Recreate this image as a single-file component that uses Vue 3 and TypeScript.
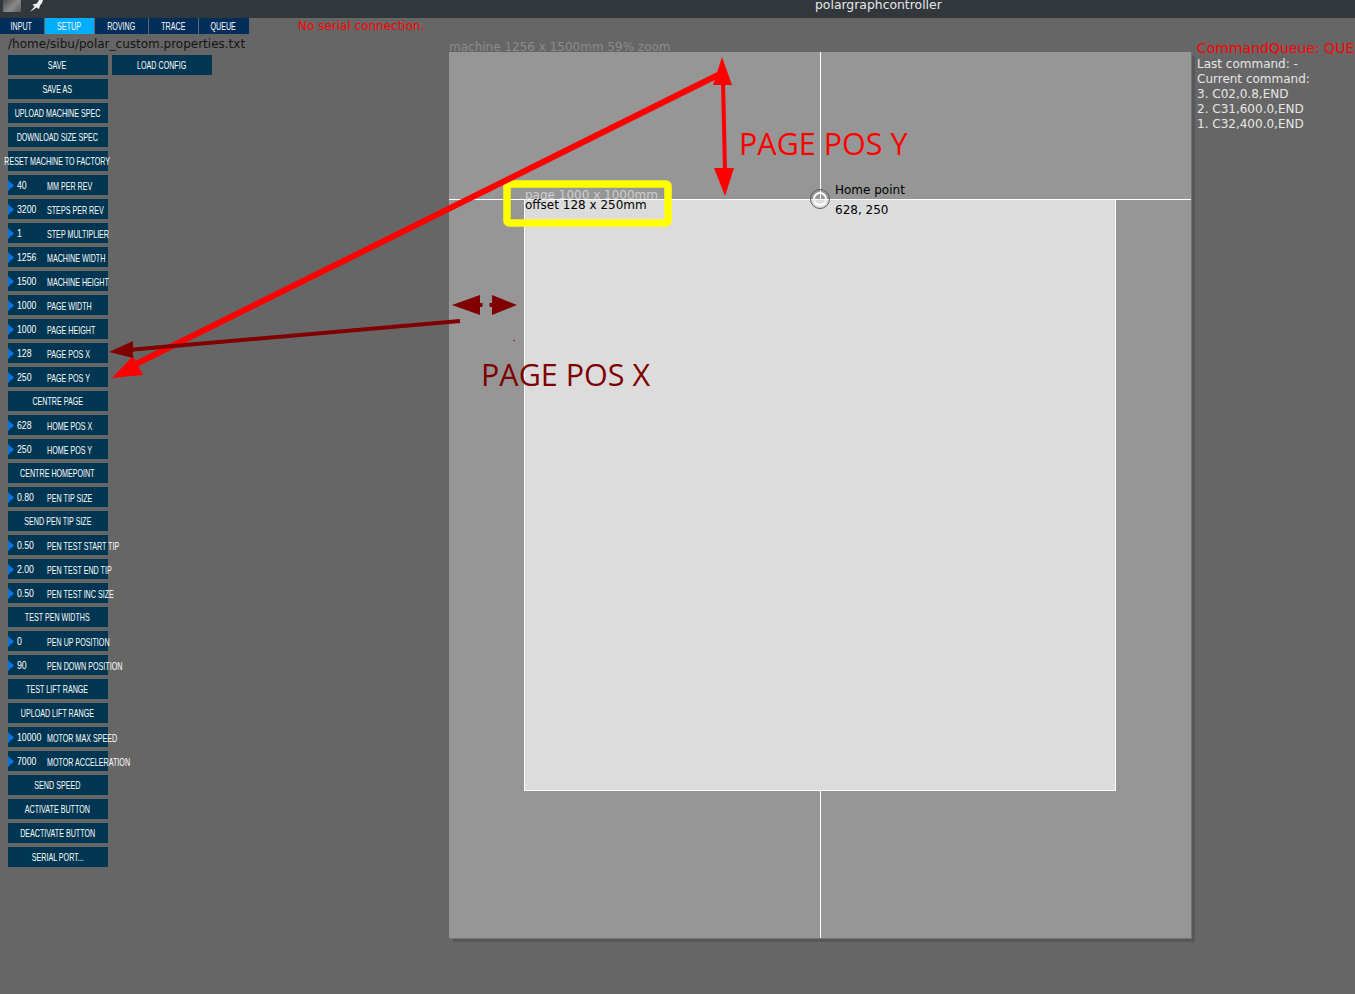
<template>
  <div class="screen">
    <!-- Window title bar -->
    <header class="titlebar">
      <div class="app-icon"></div>
      <svg class="pin" width="14" height="12" viewBox="0 0 14 12">
        <path d="M1 12 L5.5 6.5 L3.5 4.5 L8 3.5 L10 0 L14 0 L13 3 L11 5.5 L10 9 L7.5 7.5 Z" fill="#f0f0f0" />
      </svg>
      <span class="window-title">polargraphcontroller</span>
    </header>

    <!-- Tabs and serial status -->
    <nav class="tabs">
      <div
        v-for="tab in tabs"
        :key="tab.label"
        class="tab"
        :class="{ active: tab.label === 'SETUP' }"
        :style="{ width: tab.width + 'px' }"
      >
        <span class="squeeze">{{ tab.label }}</span>
      </div>
      <span class="serial">No serial connection.</span>
    </nav>

    <div class="workspace">
      <!-- Control panel -->
      <aside class="panel">
        <div class="config-path">/home/sibu/polar_custom.properties.txt</div>
        <div class="rows">
          <div class="row-pair">
            <div class="ctl button"><span class="squeeze">SAVE</span></div>
            <div class="ctl button"><span class="squeeze">LOAD CONFIG</span></div>
          </div>
          <template v-for="item in controls" :key="item.label">
            <div v-if="item.value" class="ctl number">
              <span class="value">{{ item.value }}</span>
              <span class="label">{{ item.label }}</span>
            </div>
            <div v-else class="ctl button"><span class="squeeze">{{ item.label }}</span></div>
          </template>
        </div>
      </aside>

      <!-- Machine drawing -->
      <section class="machine">
        <span class="machine-caption">machine 1256 x 1500mm 59% zoom</span>
        <div class="cross-v"></div>
        <div class="page"></div>
        <div class="cross-h"></div>
        <span class="page-caption">page 1000 x 1000mm</span>
        <span class="offset-caption">offset 128 x 250mm</span>
        <div class="home-marker"></div>
        <div class="home-text">Home point<br />628, 250</div>
      </section>

      <!-- Command queue -->
      <aside class="queue">
        <div class="queue-title">CommandQueue: QUEUE</div>
        <div v-for="line in queueLines" :key="line">{{ line }}</div>
      </aside>
    </div>

    <!-- Annotations drawn over the screenshot -->
    <svg class="annotations" width="1355" height="994" viewBox="0 0 1355 994">
      <rect x="507" y="184" width="161" height="39" rx="2" fill="none" stroke="#ffff00" stroke-width="7.5" />

      <line x1="722" y1="73" x2="130" y2="367" stroke="#ff0000" stroke-width="6" />
      <polygon points="112,378 133,356 143,375" fill="#ff0000" />
      <line x1="723" y1="80" x2="725" y2="172" stroke="#ff0000" stroke-width="4" />
      <polygon points="722,57 713,85 732,85" fill="#ff0000" />
      <polygon points="725,196 714,168 734,168" fill="#ff0000" />

      <line x1="460" y1="321" x2="128" y2="350" stroke="#800000" stroke-width="4" />
      <polygon points="109,352 133,341 133,358" fill="#800000" />
      <polygon points="452,305 480,295 480,315" fill="#800000" />
      <rect x="480" y="303" width="2.5" height="4" fill="#800000" />
      <polygon points="517,305 492,295 492,315" fill="#800000" />
      <rect x="489.5" y="303" width="2.5" height="4" fill="#800000" />
      <rect x="513.5" y="340" width="1.5" height="1" fill="#800000" />
    </svg>
    <div class="note note-y">PAGE POS Y</div>
    <div class="note note-x">PAGE POS X</div>
  </div>
</template>

<script setup lang="ts">
interface Control {
  label: string
  value?: string
}

const tabs = [
  { label: 'INPUT', width: 44 },
  { label: 'SETUP', width: 49 },
  { label: 'ROVING', width: 53 },
  { label: 'TRACE', width: 49 },
  { label: 'QUEUE', width: 50 }
]

const controls: Control[] = [
  { label: 'SAVE AS' },
  { label: 'UPLOAD MACHINE SPEC' },
  { label: 'DOWNLOAD SIZE SPEC' },
  { label: 'RESET MACHINE TO FACTORY' },
  { label: 'MM PER REV', value: '40' },
  { label: 'STEPS PER REV', value: '3200' },
  { label: 'STEP MULTIPLIER', value: '1' },
  { label: 'MACHINE WIDTH', value: '1256' },
  { label: 'MACHINE HEIGHT', value: '1500' },
  { label: 'PAGE WIDTH', value: '1000' },
  { label: 'PAGE HEIGHT', value: '1000' },
  { label: 'PAGE POS X', value: '128' },
  { label: 'PAGE POS Y', value: '250' },
  { label: 'CENTRE PAGE' },
  { label: 'HOME POS X', value: '628' },
  { label: 'HOME POS Y', value: '250' },
  { label: 'CENTRE HOMEPOINT' },
  { label: 'PEN TIP SIZE', value: '0.80' },
  { label: 'SEND PEN TIP SIZE' },
  { label: 'PEN TEST START TIP', value: '0.50' },
  { label: 'PEN TEST END TIP', value: '2.00' },
  { label: 'PEN TEST INC SIZE', value: '0.50' },
  { label: 'TEST PEN WIDTHS' },
  { label: 'PEN UP POSITION', value: '0' },
  { label: 'PEN DOWN POSITION', value: '90' },
  { label: 'TEST LIFT RANGE' },
  { label: 'UPLOAD LIFT RANGE' },
  { label: 'MOTOR MAX SPEED', value: '10000' },
  { label: 'MOTOR ACCELERATION', value: '7000' },
  { label: 'SEND SPEED' },
  { label: 'ACTIVATE BUTTON' },
  { label: 'DEACTIVATE BUTTON' },
  { label: 'SERIAL PORT...' }
]

const queueLines = [
  'Last command: -',
  'Current command:',
  '3. C02,0.8,END',
  '2. C31,600.0,END',
  '1. C32,400.0,END'
]
</script>

<style scoped>
.screen {
  position: relative;
  width: 1355px;
  height: 994px;
  overflow: hidden;
  background: #666666;
  font-family: 'DejaVu Sans', sans-serif;
  font-size: 12px;
}

.titlebar {
  display: flex;
  align-items: flex-start;
  height: 18px;
  background: #32373b;
  color: #e8e8e8;
}

.app-icon {
  width: 18px;
  height: 12px;
  margin-left: 3px;
  background: linear-gradient(135deg, #4a4a4a, #8a8a8a 55%, #5a5a5a);
}

.pin {
  margin-left: 8px;
}

.window-title {
  position: absolute;
  left: 815px;
  top: -3px;
  font-size: 12.4px;
  line-height: 15px;
}

.tabs {
  display: flex;
  gap: 1px;
  height: 16px;
  align-items: stretch;
}

.tab {
  display: flex;
  align-items: center;
  justify-content: center;
  background: #002d5a;
  color: #ffffff;
  font-family: 'Liberation Sans', sans-serif;
  font-size: 10.5px;
}

.tab.active {
  background: #00adff;
}

.squeeze {
  display: inline-block;
  flex-shrink: 0;
  transform: translateX(-0.5px) scaleX(0.68);
}

.serial {
  margin-left: 48px;
  color: #ff0000;
  line-height: 17px;
}

.workspace {
  display: flex;
  align-items: flex-start;
}

.panel {
  width: 449px;
  flex-shrink: 0;
  padding-left: 8px;
  box-sizing: border-box;
}

.config-path {
  height: 21px;
  line-height: 20px;
  color: #141414;
}

.rows {
  display: flex;
  flex-direction: column;
  gap: 4px;
}

.row-pair {
  display: flex;
  gap: 4px;
}

.ctl {
  position: relative;
  width: 100px;
  height: 20px;
  background: #003652;
  color: #ffffff;
  font-family: 'Liberation Sans', sans-serif;
  font-size: 10.5px;
  white-space: nowrap;
}

.button {
  display: flex;
  align-items: center;
  justify-content: center;
}

.number {
  display: flex;
  align-items: center;
  padding-left: 9px;
  box-sizing: border-box;
}

.number::before {
  content: '';
  position: absolute;
  left: 0;
  top: 5px;
  width: 6px;
  height: 11px;
  background: #0a72d8;
  clip-path: polygon(0 0, 100% 50%, 0 100%);
}

.value {
  width: 30px;
  flex-shrink: 0;
  margin-top: -1px;
  transform: scaleX(0.83);
  transform-origin: left center;
}

.label {
  margin-top: 1px;
  transform: scaleX(0.68);
  transform-origin: left center;
}

.machine {
  position: relative;
  flex-shrink: 0;
  width: 742px;
  height: 886px;
  margin-top: 18px;
  background: #969696;
  box-shadow: 1px 1px 0 #747474, 4px 4px 0 #585858;
}

.machine-caption {
  position: absolute;
  left: 0;
  top: -12px;
  color: #8c8c8c;
  line-height: 14px;
  white-space: nowrap;
}

.cross-v {
  position: absolute;
  left: 371px;
  top: 0;
  bottom: 0;
  width: 1px;
  background: #ffffff;
}

.cross-h {
  position: absolute;
  left: 0;
  right: 0;
  top: 147px;
  height: 1px;
  background: #ffffff;
}

.page {
  position: absolute;
  left: 75px;
  top: 147px;
  width: 590px;
  height: 590px;
  background: #dcdcdc;
  border: 1px solid #ffffff;
  box-sizing: content-box;
}

.page-caption,
.offset-caption {
  position: absolute;
  left: 76px;
  line-height: 14px;
  white-space: nowrap;
}

.page-caption {
  top: 136px;
  color: #cfcfcf;
}

.offset-caption {
  top: 146px;
  color: #000000;
}

.home-marker {
  position: absolute;
  left: 361px;
  top: 137px;
  width: 20px;
  height: 20px;
  box-sizing: border-box;
  border-radius: 50%;
  border: 1.5px solid #5c5c5c;
}

.home-marker::after {
  content: '';
  position: absolute;
  left: 1.5px;
  top: 1.5px;
  width: 14px;
  height: 14px;
  box-sizing: border-box;
  border-radius: 50%;
  border: 2px solid #ffffff;
}

.home-text {
  position: absolute;
  left: 386px;
  top: 128px;
  color: #000000;
  line-height: 20px;
  white-space: nowrap;
}

.queue {
  margin-left: 6px;
  margin-top: 7px;
  color: #e6e6e6;
  line-height: 15px;
  white-space: nowrap;
}

.queue-title {
  height: 16px;
  color: #ff0000;
  font-size: 14px;
}

.annotations {
  position: absolute;
  left: 0;
  top: 0;
  pointer-events: none;
}

.note {
  position: absolute;
  font-family: 'Open Sans', sans-serif;
  font-size: 30.5px;
  line-height: 40px;
  white-space: nowrap;
}

.note-y {
  left: 739px;
  top: 123px;
  color: #ff0000;
}

.note-x {
  left: 481px;
  top: 354px;
  color: #800000;
}
</style>
